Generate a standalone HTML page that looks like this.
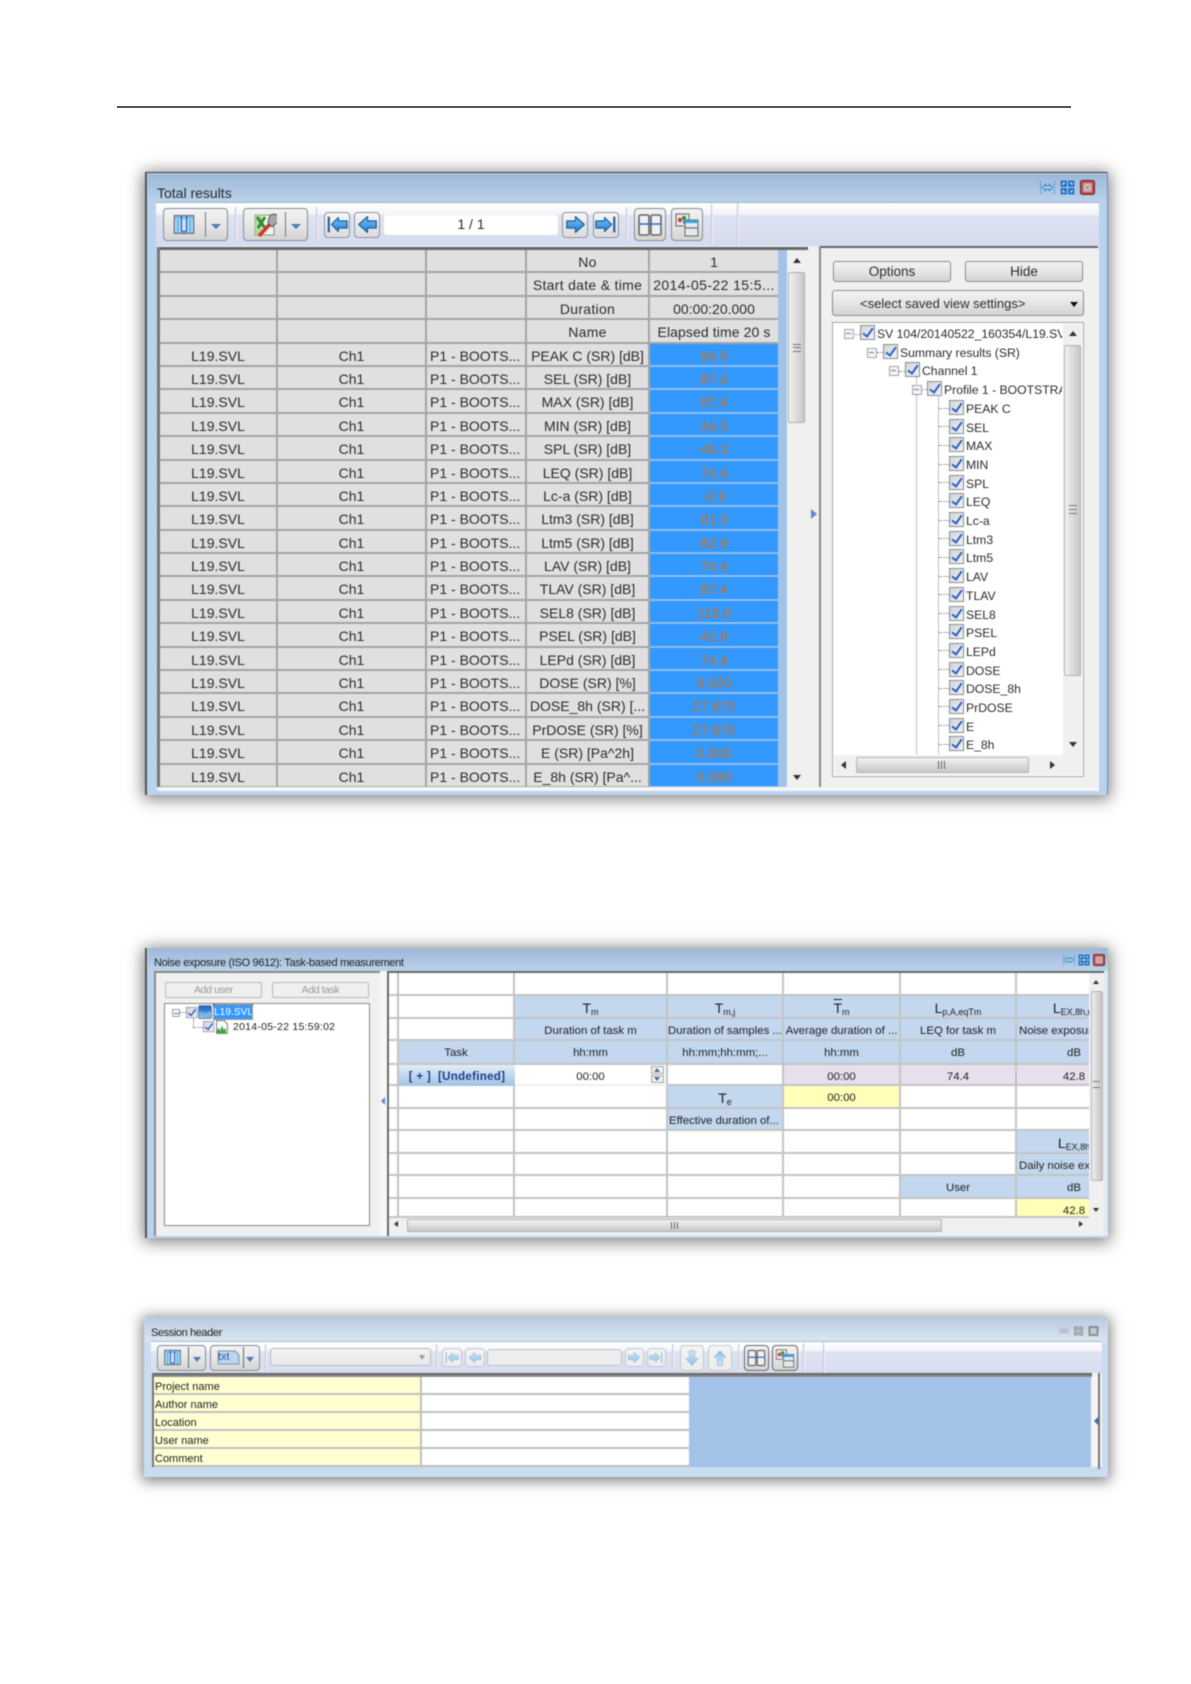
<!DOCTYPE html>
<html><head><meta charset="utf-8"><title>Results</title>
<style>
html,body{margin:0;padding:0;background:#fff}
body{position:relative;width:1191px;height:1684px;overflow:hidden;font-family:"Liberation Sans",sans-serif;color:#2c2c2c}
.a{position:absolute;box-sizing:border-box}
.win{position:absolute;box-sizing:border-box;background:#b9d2ee;box-shadow:0 2px 15px 2px rgba(0,0,0,.5)}
.blur{position:absolute;left:0;top:0;width:1191px;height:1684px;filter:blur(.45px)}
.btn{position:absolute;box-sizing:border-box;border:1.5px solid #858c94;border-radius:4px;background:linear-gradient(#f3f3f3,#e6e6e6 50%,#d4d4d4)}
.nb{position:absolute;box-sizing:border-box;border:1.5px solid #8d949c;border-radius:4px;background:linear-gradient(#f6f6f6,#dcdcdc)}
.dis{border-color:#c4c8cc;background:linear-gradient(#f4f4f4,#ececec)}
.sep{position:absolute;width:1px;background:#c3c8d4;border-right:1px solid #f4f4f8}
svg{position:absolute;overflow:visible}
.tri{position:absolute;width:0;height:0;border-style:solid;border-color:transparent}
.u{border-width:0 4px 5px;border-bottom-color:#333}
.d{border-width:5px 4px 0;border-top-color:#333}
.l{border-width:4px 5px 4px 0;border-right-color:#333}
.ri{border-width:4px 0 4px 5px;border-left-color:#333}
.bd{border-width:6px 6px 0;border-top-color:#4b79b8}

/* table 1 */
#t1{position:absolute;left:160px;top:250px;width:618px;height:537px;overflow:hidden;background:#e0e0e0}
.r{display:flex;height:23.4px;box-sizing:border-box;font-size:14px;line-height:25px;text-align:center}
.r span{box-sizing:border-box;border-right:2px solid #a4a4a4;border-bottom:2px solid #a4a4a4;height:23.4px;white-space:nowrap;overflow:hidden;background:#e0e0e0}
.r span:nth-child(1){width:118px}
.r span:nth-child(2){width:149px}
.r span:nth-child(3){width:100px;text-align:left;padding-left:3px}
.r span:nth-child(4){width:123px}
.r span:nth-child(5){width:128px;border-right:0}
.r.h span:nth-child(3){padding:0}
.r.h span:nth-child(4){letter-spacing:.3px}
.r b{display:block;box-sizing:border-box;width:128px;height:23.4px;font-weight:400;color:#c9701f;background:#3399ff;border-bottom:2px solid #8fbdec}
/* tree 1 */
.ti{position:absolute;height:16px;font-size:12.2px;line-height:18px;white-space:nowrap;color:#2c2c2c;padding-left:17px}
.ck{position:absolute;left:0;top:0;width:15px;height:15px;box-sizing:border-box;border:1.5px solid #8b8e93;background:linear-gradient(135deg,#d2d4d8,#f2f2f4)}
.ck:after{content:"";position:absolute;left:4px;top:0;width:4px;height:9px;border:solid #2a62c6;border-width:0 2px 2px 0;transform:rotate(35deg)}
.ck.s{transform:scale(.74);transform-origin:0 0}
.ex{position:absolute;width:10px;height:10px;box-sizing:border-box;border:1.5px solid #a0a5ab;background:#f4f4f6}
.ex:after{content:"";position:absolute;left:1px;top:2.5px;width:5px;height:1.5px;background:#6f7f9a}
.dv{position:absolute;border-left:1px dotted #808080}
.dh{position:absolute;border-top:1px dotted #808080}

/* noise grid */
#g2{position:absolute;left:389px;top:973px;height:245px;overflow:hidden;background:#fff;display:grid;
 grid-template-columns:10px 116px 153px 116px 117px 116px 116px;
 grid-template-rows:23px 23px 22px 24px 21px 23px 22px 23px 22px 23px 19px;
 font-size:11.4px;text-align:center;width:700px}
#g2 i{font-style:normal;box-sizing:border-box;border-right:2px solid #c4c4c4;border-bottom:2px solid #c4c4c4;line-height:24px;white-space:nowrap;overflow:hidden;color:#222}
#g2 .b{background:#c3d7ef}
#g2 .lv{background:#e5e0ec}
#g2 .y{background:#ffffb8}
#g2 .nb2{border-right:0}
#g2 sub{font-size:9px;vertical-align:-2px;line-height:0}
#g2 .big{font-size:14px}
#g2 .left{text-align:left;padding-left:2px}

/* session */
.sr{position:absolute;box-sizing:border-box;height:18px;border-bottom:2px solid #c0c0c0;font-size:11px;line-height:20px;padding-left:1px;color:#222;overflow:hidden}
</style></head>
<body>
<svg width="0" height="0" style="position:absolute">
 <defs>
  <linearGradient id="ag" x1="0" y1="0" x2="0" y2="1"><stop offset="0" stop-color="#7cc6f5"/><stop offset="1" stop-color="#1f7fd0"/></linearGradient>
  <linearGradient id="ag2" x1="0" y1="0" x2="0" y2="1"><stop offset="0" stop-color="#cfe6f6"/><stop offset="1" stop-color="#8cc2e8"/></linearGradient>
  <symbol id="aL" viewBox="0 0 24 24"><path d="M2 12L12 3V8H22V16H12V21Z" fill="url(#ag)" stroke="#1b5f9e" stroke-width="1.4" stroke-linejoin="round"/></symbol>
  <symbol id="aF" viewBox="0 0 24 24"><path d="M2 3V21" stroke="#1b5f9e" stroke-width="2.4"/><path d="M5 12L13 4V8H23V16H13V20Z" fill="url(#ag)" stroke="#1b5f9e" stroke-width="1.4" stroke-linejoin="round"/></symbol>
  <symbol id="aLd" viewBox="0 0 24 24"><path d="M2 12L12 3V8H22V16H12V21Z" fill="url(#ag2)" stroke="#9cc2dc" stroke-width="1.2" stroke-linejoin="round"/></symbol>
  <symbol id="aFd" viewBox="0 0 24 24"><path d="M2 3V21" stroke="#9cc2dc" stroke-width="2.2"/><path d="M5 12L13 4V8H23V16H13V20Z" fill="url(#ag2)" stroke="#9cc2dc" stroke-width="1.2" stroke-linejoin="round"/></symbol>
  <symbol id="cols" viewBox="0 0 24 24"><rect x="1" y="2" width="22" height="20" fill="#c8e6f6" stroke="#6d7f90" stroke-width="1.8"/><rect x="2" y="3" width="20" height="3" fill="#7fc4ee"/><path d="M5 6V21M19 6V21" stroke="#66bcec" stroke-width="3"/><path d="M9 3V20M15 3V20M9 20H15" stroke="#2858b8" stroke-width="1.5" fill="none"/></symbol>
  <symbol id="xls" viewBox="0 0 24 24"><rect x="2" y="2" width="19" height="20" fill="#f0f6ea" stroke="#7d9a74" stroke-width="1"/><rect x="2" y="2" width="7" height="20" fill="#b4d8a0"/><path d="M4 4L12 15M12 4L5 15" stroke="#2f8d35" stroke-width="3"/><path d="M6 23L17 11" stroke="#d8352a" stroke-width="3.6"/><path d="M16 5a5 5 0 1 1 6 6l-3 3-4-4Z" fill="#a4a9ae" stroke="#55595e" stroke-width="1"/></symbol>
  <symbol id="two" viewBox="0 0 24 24"><rect x="1" y="2" width="10" height="20" rx="1.5" fill="#eef0f2" stroke="#666" stroke-width="1.6"/><rect x="13" y="2" width="10" height="20" rx="1.5" fill="#eef0f2" stroke="#666" stroke-width="1.6"/><path d="M1 11H23" stroke="#2d6cc8" stroke-width="1.6"/></symbol>
  <symbol id="multi" viewBox="0 0 24 24"><rect x="1" y="1" width="13" height="12" fill="#e8e8e8" stroke="#777" stroke-width="1.2"/><circle cx="5" cy="7" r="2.2" fill="#d8382c"/><circle cx="9" cy="5" r="2.2" fill="#2f9a3a"/><circle cx="10" cy="9" r="2" fill="#2f6fd0"/><rect x="10" y="7" width="13" height="8" fill="#dfeaf5" stroke="#777" stroke-width="1.2"/><rect x="10" y="7" width="13" height="3" fill="#3f9be0"/><rect x="10" y="15" width="13" height="8" fill="#e8e8e8" stroke="#777" stroke-width="1.2"/></symbol>
  <symbol id="fitw" viewBox="0 0 24 24"><path d="M1 2V22M23 2V22" stroke="#3f93dc" stroke-width="2.4" stroke-dasharray="2.5 2"/><path d="M4 12L9 7V10H15V7L20 12L15 17V14H9V17Z" fill="#cfe6f8" stroke="#2f86d0" stroke-width="1.7"/></symbol>
  <symbol id="fitall" viewBox="0 0 24 24"><g fill="#1f6fc4"><rect x="1" y="1" width="10" height="10"/><rect x="13" y="1" width="10" height="10"/><rect x="1" y="13" width="10" height="10"/><rect x="13" y="13" width="10" height="10"/></g><g fill="#bcdcf6"><path d="M4 4H9L4 9ZM20 4V9L15 4ZM4 20V15L9 20ZM20 20H15L20 15Z"/></g></symbol>
  <symbol id="close" viewBox="0 0 24 24"><rect x="1" y="1" width="22" height="22" rx="3" fill="#c8504c" stroke="#6e2e2c" stroke-width="2"/><rect x="5" y="5" width="14" height="14" fill="#d0a8a8"/><path d="M8 8L16 16M16 8L8 16" stroke="#fff" stroke-width="3.2"/><path d="M8 8L16 16M16 8L8 16" stroke="#444" stroke-width="1.1"/></symbol>
  <symbol id="aD" viewBox="0 0 24 24"><path d="M12 23L3 13H8V1H16V13H21Z" fill="url(#ag2)" stroke="#9cc2dc" stroke-width="1.2" stroke-linejoin="round"/></symbol>
  <symbol id="txt" viewBox="0 0 24 16"><path d="M1 1H19L23 5V15H1Z" fill="#bcd6ee" stroke="#6c8cae"/></symbol>
 </defs>
</svg>

<div class="a" style="left:117px;top:106px;width:954px;height:2px;background:#555"></div>

<div class="blur">

<!-- ===== WINDOW 1 ===== -->
<div class="win" style="left:145px;top:172px;width:963px;height:623px;border-top:1.5px solid #3a3a3a;border-left:2px solid #555;border-right:1px solid #6b93b0"></div>
<div class="a" style="left:148px;top:174px;width:959px;height:29px;background:linear-gradient(#9db8d8,#bcd3ea)"></div>
<div class="a" style="left:157px;top:183px;font-size:14px;line-height:20px;color:#2a2a2a">Total results</div>
<svg style="left:1040px;top:180px" width="15" height="15"><use href="#fitw"/></svg>
<svg style="left:1060px;top:180px" width="15" height="15"><use href="#fitall"/></svg>
<svg style="left:1080px;top:180px" width="15" height="15"><use href="#close"/></svg>

<!-- toolbar -->
<div class="a" style="left:156px;top:202px;width:943px;height:44px;background:linear-gradient(#fff,#f4f5fa 25%,#dfe3f2 30%,#d5dbee);border-top:1px solid #9fb3c9"></div>
<div class="btn" style="left:163px;top:208px;width:65px;height:33px"></div>
<svg style="left:173px;top:214px" width="22" height="21"><use href="#cols"/></svg>
<div class="a" style="left:205px;top:212px;width:1px;height:25px;background:#777"></div>
<div class="tri bd" style="left:211px;top:224px;border-width:5px 5px 0"></div>
<div class="sep" style="left:235px;top:207px;height:35px"></div>
<div class="btn" style="left:243px;top:208px;width:65px;height:33px"></div>
<svg style="left:253px;top:213px" width="24" height="24"><use href="#xls"/></svg>
<div class="a" style="left:285px;top:212px;width:1px;height:25px;background:#777"></div>
<div class="tri bd" style="left:291px;top:224px;border-width:5px 5px 0"></div>
<div class="sep" style="left:316px;top:207px;height:35px"></div>
<div class="nb" style="left:324px;top:212px;width:26px;height:26px"></div>
<svg style="left:327px;top:214px" width="21" height="21"><use href="#aF"/></svg>
<div class="nb" style="left:354px;top:212px;width:26px;height:26px"></div>
<svg style="left:357px;top:214px" width="21" height="21"><use href="#aL"/></svg>
<div class="a" style="left:384px;top:215px;width:174px;height:20px;background:#fff;border-radius:3px;font-size:14px;line-height:19px;text-align:center">1 / 1</div>
<div class="nb" style="left:562px;top:212px;width:26px;height:26px"></div>
<svg style="left:565px;top:214px;transform:scaleX(-1)" width="21" height="21"><use href="#aL"/></svg>
<div class="nb" style="left:593px;top:212px;width:26px;height:26px"></div>
<svg style="left:595px;top:214px;transform:scaleX(-1)" width="21" height="21"><use href="#aF"/></svg>
<div class="sep" style="left:626px;top:207px;height:35px"></div>
<div class="btn" style="left:634px;top:208px;width:32px;height:33px"></div>
<svg style="left:638px;top:213px" width="24" height="24"><use href="#two"/></svg>
<div class="btn" style="left:671px;top:208px;width:32px;height:33px"></div>
<svg style="left:675px;top:213px" width="24" height="24"><use href="#multi"/></svg>
<div class="sep" style="left:711px;top:204px;height:40px"></div>
<div class="sep" style="left:737px;top:203px;height:42px"></div>

<!-- body -->
<div class="a" style="left:157px;top:246px;width:942px;height:545px;background:#f0f0f0"></div>
<div class="a" style="left:157px;top:247px;width:651px;height:3px;background:#676767"></div>
<div class="a" style="left:157px;top:247px;width:3px;height:540px;background:#777"></div>
<div class="a" style="left:778px;top:250px;width:9px;height:537px;background:#a3c2e8"></div>
<div class="a" style="left:819px;top:246px;width:279px;height:2px;background:#676767"></div>
<div class="a" style="left:819px;top:246px;width:2px;height:545px;background:#8a8a8a"></div>
<div class="a" style="left:159px;top:787px;width:940px;height:4px;background:#f6f6f6"></div>

<div id="t1">
<div class="r h"><span></span><span></span><span></span><span>No</span><span>1</span></div>
<div class="r h"><span></span><span></span><span></span><span>Start date &amp; time</span><span style="letter-spacing:.4px">2014-05-22 15:5...</span></div>
<div class="r h"><span></span><span></span><span></span><span>Duration</span><span>00:00:20.000</span></div>
<div class="r h"><span></span><span></span><span></span><span>Name</span><span style="letter-spacing:.1px">Elapsed time 20 s</span></div>
<div class="r"><span>L19.SVL</span><span>Ch1</span><span>P1 - BOOTS...</span><span>PEAK C (SR) [dB]</span><b>94.5</b></div>
<div class="r"><span>L19.SVL</span><span>Ch1</span><span>P1 - BOOTS...</span><span>SEL (SR) [dB]</span><b>87.4</b></div>
<div class="r"><span>L19.SVL</span><span>Ch1</span><span>P1 - BOOTS...</span><span>MAX (SR) [dB]</span><b>87.4</b></div>
<div class="r"><span>L19.SVL</span><span>Ch1</span><span>P1 - BOOTS...</span><span>MIN (SR) [dB]</span><b>44.5</b></div>
<div class="r"><span>L19.SVL</span><span>Ch1</span><span>P1 - BOOTS...</span><span>SPL (SR) [dB]</span><b>46.3</b></div>
<div class="r"><span>L19.SVL</span><span>Ch1</span><span>P1 - BOOTS...</span><span>LEQ (SR) [dB]</span><b>74.4</b></div>
<div class="r"><span>L19.SVL</span><span>Ch1</span><span>P1 - BOOTS...</span><span>Lc-a (SR) [dB]</span><b>-0.9</b></div>
<div class="r"><span>L19.SVL</span><span>Ch1</span><span>P1 - BOOTS...</span><span>Ltm3 (SR) [dB]</span><b>81.3</b></div>
<div class="r"><span>L19.SVL</span><span>Ch1</span><span>P1 - BOOTS...</span><span>Ltm5 (SR) [dB]</span><b>82.9</b></div>
<div class="r"><span>L19.SVL</span><span>Ch1</span><span>P1 - BOOTS...</span><span>LAV (SR) [dB]</span><b>74.4</b></div>
<div class="r"><span>L19.SVL</span><span>Ch1</span><span>P1 - BOOTS...</span><span>TLAV (SR) [dB]</span><b>87.4</b></div>
<div class="r"><span>L19.SVL</span><span>Ch1</span><span>P1 - BOOTS...</span><span>SEL8 (SR) [dB]</span><b>119.0</b></div>
<div class="r"><span>L19.SVL</span><span>Ch1</span><span>P1 - BOOTS...</span><span>PSEL (SR) [dB]</span><b>42.8</b></div>
<div class="r"><span>L19.SVL</span><span>Ch1</span><span>P1 - BOOTS...</span><span>LEPd (SR) [dB]</span><b>74.4</b></div>
<div class="r"><span>L19.SVL</span><span>Ch1</span><span>P1 - BOOTS...</span><span>DOSE (SR) [%]</span><b>0.020</b></div>
<div class="r"><span>L19.SVL</span><span>Ch1</span><span>P1 - BOOTS...</span><span>DOSE_8h (SR) [...</span><b>27.670</b></div>
<div class="r"><span>L19.SVL</span><span>Ch1</span><span>P1 - BOOTS...</span><span>PrDOSE (SR) [%]</span><b>27.670</b></div>
<div class="r"><span>L19.SVL</span><span>Ch1</span><span>P1 - BOOTS...</span><span>E (SR) [Pa^2h]</span><b>0.000</b></div>
<div class="r"><span>L19.SVL</span><span>Ch1</span><span>P1 - BOOTS...</span><span>E_8h (SR) [Pa^...</span><b>0.090</b></div>
</div>

<!-- main scrollbar -->
<div class="a" style="left:787px;top:250px;width:21px;height:537px;background:#f0f0f0"></div>
<div class="tri u" style="left:793px;top:258px"></div>
<div class="a" style="left:788px;top:272px;width:17px;height:151px;background:linear-gradient(90deg,#f2f2f2,#dcdcdc 50%,#c8c8c8);border:1px solid #b0b0b0;border-radius:2px"></div>
<div class="a" style="left:793px;top:344px;width:8px;height:8px;border-top:1px solid #777;border-bottom:1px solid #777"></div>
<div class="a" style="left:793px;top:347px;width:8px;height:1px;background:#777"></div>
<div class="tri d" style="left:793px;top:775px"></div>
<div class="tri" style="left:811px;top:509px;border-width:5px 0 5px 6px;border-left-color:#5a8cc8"></div>

<!-- right pane -->
<div class="btn" style="left:833px;top:261px;width:118px;height:21px;border-color:#8b8b8b;border-radius:3px;font-size:13.5px;line-height:19px;text-align:center">Options</div>
<div class="btn" style="left:965px;top:261px;width:118px;height:21px;border-color:#8b8b8b;border-radius:3px;font-size:13.5px;line-height:19px;text-align:center">Hide</div>
<div class="btn" style="left:832px;top:290px;width:252px;height:26px;border-color:#8b8b8b;border-radius:3px;font-size:13px;line-height:26px;padding-left:27px;white-space:nowrap">&lt;select saved view settings&gt;</div>
<div class="tri" style="left:1070px;top:302px;border-width:5px 4px 0;border-top-color:#111"></div>

<div class="a" style="left:832px;top:322px;width:252px;height:455px;background:#fff;border:1.5px solid #a8a8a8"></div>
<div class="a" id="treeclip" style="left:834px;top:324px;width:228px;height:430px;overflow:hidden">
 <div class="dv" style="left:82px;top:52px;height:380px"></div>
 <div class="dv" style="left:104px;top:66px;height:370px"></div>
 <div class="dh" style="left:21px;top:10px;width:5px"></div>
 <div class="dh" style="left:43px;top:28px;width:6px"></div>
 <div class="dh" style="left:65px;top:47px;width:6px"></div>
 <div class="dh" style="left:88px;top:65px;width:5px"></div>
 <div class="ex" style="left:10px;top:5px"></div><div class="ti" style="left:26px;top:1px">SV 104/20140522_160354/L19.SVL<div class="ck"></div></div>
 <div class="ex" style="left:33px;top:24px"></div><div class="ti" style="left:49px;top:19.7px">Summary results (SR)<div class="ck"></div></div>
 <div class="ex" style="left:55px;top:42px"></div><div class="ti" style="left:71px;top:38.4px">Channel 1<div class="ck"></div></div>
 <div class="ex" style="left:78px;top:61px"></div><div class="ti" style="left:93px;top:57.1px">Profile 1 - BOOTSTRAP<div class="ck"></div></div>
 <div class="dh" style="left:105px;top:84px;width:10px"></div><div class="ti" style="left:115px;top:75.8px">PEAK C<div class="ck"></div></div>
 <div class="dh" style="left:105px;top:102px;width:10px"></div><div class="ti" style="left:115px;top:94.5px">SEL<div class="ck"></div></div>
 <div class="dh" style="left:105px;top:121px;width:10px"></div><div class="ti" style="left:115px;top:113.2px">MAX<div class="ck"></div></div>
 <div class="dh" style="left:105px;top:140px;width:10px"></div><div class="ti" style="left:115px;top:131.9px">MIN<div class="ck"></div></div>
 <div class="dh" style="left:105px;top:158px;width:10px"></div><div class="ti" style="left:115px;top:150.6px">SPL<div class="ck"></div></div>
 <div class="dh" style="left:105px;top:177px;width:10px"></div><div class="ti" style="left:115px;top:169.3px">LEQ<div class="ck"></div></div>
 <div class="dh" style="left:105px;top:196px;width:10px"></div><div class="ti" style="left:115px;top:188px">Lc-a<div class="ck"></div></div>
 <div class="dh" style="left:105px;top:214px;width:10px"></div><div class="ti" style="left:115px;top:206.7px">Ltm3<div class="ck"></div></div>
 <div class="dh" style="left:105px;top:233px;width:10px"></div><div class="ti" style="left:115px;top:225.4px">Ltm5<div class="ck"></div></div>
 <div class="dh" style="left:105px;top:252px;width:10px"></div><div class="ti" style="left:115px;top:244.1px">LAV<div class="ck"></div></div>
 <div class="dh" style="left:105px;top:270px;width:10px"></div><div class="ti" style="left:115px;top:262.8px">TLAV<div class="ck"></div></div>
 <div class="dh" style="left:105px;top:289px;width:10px"></div><div class="ti" style="left:115px;top:281.5px">SEL8<div class="ck"></div></div>
 <div class="dh" style="left:105px;top:308px;width:10px"></div><div class="ti" style="left:115px;top:300.2px">PSEL<div class="ck"></div></div>
 <div class="dh" style="left:105px;top:326px;width:10px"></div><div class="ti" style="left:115px;top:318.9px">LEPd<div class="ck"></div></div>
 <div class="dh" style="left:105px;top:345px;width:10px"></div><div class="ti" style="left:115px;top:337.6px">DOSE<div class="ck"></div></div>
 <div class="dh" style="left:105px;top:364px;width:10px"></div><div class="ti" style="left:115px;top:356.3px">DOSE_8h<div class="ck"></div></div>
 <div class="dh" style="left:105px;top:382px;width:10px"></div><div class="ti" style="left:115px;top:375px">PrDOSE<div class="ck"></div></div>
 <div class="dh" style="left:105px;top:401px;width:10px"></div><div class="ti" style="left:115px;top:393.7px">E<div class="ck"></div></div>
 <div class="dh" style="left:105px;top:420px;width:10px"></div><div class="ti" style="left:115px;top:412.4px">E_8h<div class="ck"></div></div>
</div>
<!-- tree scrollbars -->
<div class="a" style="left:1063px;top:324px;width:19px;height:431px;background:#f0f0f0"></div>
<div class="tri u" style="left:1069px;top:331px"></div>
<div class="a" style="left:1064px;top:345px;width:17px;height:331px;background:linear-gradient(90deg,#f0f0f0,#dcdcdc 50%,#c8c8c8);border:1px solid #b4b4b4;border-radius:2px"></div>
<div class="a" style="left:1069px;top:505px;width:8px;height:9px;border-top:1px solid #777;border-bottom:1px solid #777"></div>
<div class="a" style="left:1069px;top:509px;width:8px;height:1px;background:#777"></div>
<div class="tri d" style="left:1069px;top:742px"></div>
<div class="a" style="left:834px;top:755px;width:248px;height:20px;background:#f0f0f0"></div>
<div class="tri l" style="left:841px;top:761px"></div>
<div class="a" style="left:856px;top:757px;width:173px;height:16px;background:linear-gradient(#f2f2f2,#dcdcdc 50%,#c8c8c8);border:1px solid #b4b4b4;border-radius:2px"></div>
<div class="a" style="left:938px;top:761px;width:1px;height:8px;background:#666;box-shadow:3px 0 #666,6px 0 #666"></div>
<div class="tri ri" style="left:1050px;top:761px"></div>

<!-- ===== WINDOW 2 ===== -->
<div class="win" style="left:145px;top:948px;width:963px;height:290px;border-left:2px solid #555"></div>
<div class="a" style="left:148px;top:948px;width:960px;height:24px;background:linear-gradient(#9db8d8,#bcd3ea)"></div>
<div class="a" style="left:154px;top:955px;font-size:11px;letter-spacing:-.33px;line-height:16px;color:#222;white-space:nowrap">Noise exposure (ISO 9612): Task-based measurement</div>
<svg style="left:1063px;top:954px" width="12" height="12"><use href="#fitw"/></svg>
<svg style="left:1078px;top:954px" width="12" height="12"><use href="#fitall"/></svg>
<svg style="left:1093px;top:954px" width="12" height="12"><use href="#close"/></svg>

<div class="a" style="left:154px;top:971px;width:950px;height:265px;background:#f0f0f0"></div>
<div class="a" style="left:154px;top:971px;width:226px;height:2px;background:#8a8a8a"></div>
<div class="a" style="left:154px;top:971px;width:1.5px;height:265px;background:#8a8a8a"></div>
<div class="a" style="left:380px;top:971px;width:7px;height:265px;background:#f7f7f7"></div>

<div class="a" style="left:165px;top:982px;width:97px;height:16px;border:1px solid #b8b8b8;border-radius:2px;background:#efefef;font-size:10.5px;letter-spacing:-.4px;line-height:15px;text-align:center;color:#9a9a9a">Add user</div>
<div class="a" style="left:272px;top:982px;width:97px;height:16px;border:1px solid #b8b8b8;border-radius:2px;background:#efefef;font-size:10.5px;letter-spacing:-.4px;line-height:15px;text-align:center;color:#9a9a9a">Add task</div>
<div class="a" style="left:164px;top:1003px;width:206px;height:223px;background:#fff;border:1.5px solid #8a8a8a"></div>
<div class="ex" style="left:172px;top:1009px;width:8px;height:8px"></div>
<div class="dh" style="left:180px;top:1012px;width:6px"></div>
<div class="ck s" style="left:186px;top:1007px"></div>
<div class="a" style="left:198px;top:1005px;width:14px;height:14px;background:linear-gradient(#1f66c8,#3d92d8 60%,#7fb7d8);border:1px solid #6c8aa8;border-radius:2px;color:#cfe6ff;font-size:7px;line-height:20px;text-align:center;overflow:hidden">SVN</div>
<div class="a" style="left:214px;top:1005px;width:38px;height:14px;background:#3399ff;outline:1px dotted #5b3a00;color:#fff;font-size:10px;letter-spacing:.1px;line-height:15px;text-align:center;white-space:nowrap;overflow:hidden">L19.SVL</div>
<div class="dv" style="left:193px;top:1019px;height:8px"></div>
<div class="dh" style="left:193px;top:1027px;width:10px"></div>
<div class="ck s" style="left:203px;top:1021px"></div>
<svg style="left:216px;top:1020px" width="12" height="14" viewBox="0 0 12 14"><path d="M.5.5H8L11.5 4V13.5H.5Z" fill="#f4f6fa" stroke="#7d8794"/><path d="M1 13V10L3 8L4 11L6 6L8 10L10 8V13Z" fill="#3da82f"/></svg>
<div class="a" style="left:233px;top:1020px;font-size:10.5px;line-height:14px;white-space:nowrap;color:#222;letter-spacing:.25px">2014-05-22 15:59:02</div>
<div class="tri" style="left:381px;top:1097px;border-width:4px 4px 4px 0;border-right-color:#5a8cc8"></div>

<div class="a" style="left:387px;top:971px;width:717px;height:2.5px;background:#6a6a6a"></div>
<div class="a" style="left:387px;top:971px;width:2px;height:265px;background:#6a6a6a"></div>

<div id="g2">
<i></i><i></i><i></i><i></i><i></i><i></i><i></i>
<i></i><i></i><i class="b"><span class="big">T<sub>m</sub></span></i><i class="b"><span class="big">T<sub>m,j</sub></span></i><i class="b"><span class="big" style="text-decoration:overline">T</span><sub>m</sub></i><i class="b"><span class="big">L<sub>p,A,eqTm</sub></span></i><i class="b"><span class="big">L<sub>EX,8h,m</sub></span></i>
<i></i><i></i><i class="b">Duration of task m</i><i class="b">Duration of samples ...</i><i class="b">Average duration of ...</i><i class="b">LEQ for task m</i><i class="b left">Noise exposure level</i>
<i></i><i class="b">Task</i><i class="b">hh:mm</i><i class="b">hh:mm;hh:mm;...</i><i class="b">hh:mm</i><i class="b">dB</i><i class="b">dB</i>
<i></i><i style="background:linear-gradient(#e4eef8,#bcd4ee 55%,#a4c2e4);color:#1f3f8a;font-weight:700;font-size:11.5px;letter-spacing:.3px;border-right:0;border-bottom:0;padding:0 1px">[ + ]&nbsp; [Undefined]</i><i style="border-bottom-color:#eee;padding-right:0">00:00</i><i></i><i class="lv">00:00</i><i class="lv">74.4</i><i class="lv">42.8</i>
<i></i><i></i><i></i><i class="b"><span class="big">T<sub>e</sub></span></i><i class="y">00:00</i><i></i><i></i>
<i></i><i></i><i></i><i class="b left" style="padding-left:1px">Effective duration of...</i><i></i><i></i><i></i>
<i></i><i></i><i></i><i></i><i></i><i></i><i class="b" style="text-align:center"><span class="big">L<sub>EX,8h</sub></span></i>
<i></i><i></i><i></i><i></i><i></i><i></i><i class="b left">Daily noise exposure</i>
<i></i><i></i><i></i><i></i><i></i><i class="b">User</i><i class="b">dB</i>
<i></i><i></i><i></i><i></i><i></i><i></i><i class="y">42.8</i>
</div>
<!-- cover right of clipped col -->
<div class="a" style="left:1089px;top:973px;width:15px;height:263px;background:#f0f0f0"></div>
<div class="a" style="left:389px;top:1218px;width:715px;height:18px;background:#f0f0f0"></div>
<div class="a" style="left:1104px;top:971px;width:4px;height:265px;background:#dfe9f4"></div>
<!-- spinner -->
<div class="a" style="left:651px;top:1066px;width:13px;height:8px;background:#eee;border:1px solid #aaa"></div>
<div class="a" style="left:651px;top:1075px;width:13px;height:8px;background:#eee;border:1px solid #aaa"></div>
<div class="tri" style="left:654px;top:1068px;border-width:0 3px 4px;border-bottom-color:#4a6a9c"></div>
<div class="tri" style="left:654px;top:1077px;border-width:4px 3px 0;border-top-color:#4a6a9c"></div>
<!-- scrollbars -->
<div class="tri" style="left:1093px;top:980px;border-width:0 3.5px 4px;border-bottom-color:#333"></div>
<div class="a" style="left:1091px;top:991px;width:12px;height:190px;background:linear-gradient(90deg,#eee,#d4d4d4 60%,#c4c4c4);border:1px solid #b4b4b4;border-radius:2px"></div>
<div class="a" style="left:1093px;top:1081px;width:7px;height:7px;border-top:1px solid #777;border-bottom:1px solid #777"></div>
<div class="tri" style="left:1093px;top:1208px;border-width:4px 3.5px 0;border-top-color:#333"></div>
<div class="tri" style="left:394px;top:1221px;border-width:3.5px 4px 3.5px 0;border-right-color:#333"></div>
<div class="a" style="left:407px;top:1219px;width:535px;height:13px;background:linear-gradient(#f2f2f2,#dcdcdc 55%,#c8c8c8);border:1px solid #b0b0b0;border-radius:2px"></div>
<div class="a" style="left:671px;top:1222px;width:1px;height:7px;background:#666;box-shadow:3px 0 #666,6px 0 #666"></div>
<div class="tri" style="left:1079px;top:1221px;border-width:3.5px 0 3.5px 4px;border-left-color:#333"></div>

<!-- ===== WINDOW 3 ===== -->
<div class="win" style="left:144px;top:1317px;width:964px;height:160px;background:#c9dcf0;box-shadow:0 2px 13px 2px rgba(0,0,0,.5)"></div>
<div class="a" style="left:145px;top:1317px;width:962px;height:25px;background:linear-gradient(#bacbde,#dae7f4)"></div>
<div class="a" style="left:151px;top:1325px;font-size:11px;letter-spacing:-.4px;line-height:16px;color:#222;white-space:nowrap">Session header</div>
<svg style="left:1058px;top:1326px;opacity:.55;filter:grayscale(1)" width="12" height="10"><use href="#fitw"/></svg>
<svg style="left:1073px;top:1326px;opacity:.55;filter:grayscale(1)" width="11" height="10"><use href="#fitall"/></svg>
<svg style="left:1088px;top:1326px;opacity:.55;filter:grayscale(1)" width="11" height="10"><use href="#close"/></svg>

<div class="a" style="left:151px;top:1341px;width:951px;height:33px;background:linear-gradient(#fff,#f6f7fb 25%,#dfe3f2 32%,#d7ddef);border-top:1px solid #aab8c8"></div>
<div class="btn" style="left:157px;top:1345px;width:49px;height:26px"></div>
<svg style="left:164px;top:1349px" width="17" height="17"><use href="#cols"/></svg>
<div class="a" style="left:188px;top:1347px;width:1px;height:21px;background:#666"></div>
<div class="tri bd" style="left:193px;top:1357px;border-width:5px 4.5px 0"></div>
<div class="btn" style="left:210px;top:1345px;width:50px;height:26px"></div>
<svg style="left:217px;top:1350px" width="23" height="15"><use href="#txt"/></svg>
<div class="a" style="left:218px;top:1351px;font-size:11px;line-height:13px;color:#2a5aa8">txt</div>
<div class="a" style="left:243px;top:1347px;width:1px;height:21px;background:#666"></div>
<div class="tri bd" style="left:246px;top:1357px;border-width:5px 4.5px 0"></div>
<div class="sep" style="left:265px;top:1344px;height:27px"></div>
<div class="a" style="left:270px;top:1348px;width:161px;height:18px;border:1px solid #b4bac2;border-radius:3px;background:linear-gradient(#f2f2f2,#e8e8ec)"></div>
<div class="tri" style="left:419px;top:1355px;border-width:5px 3.5px 0;border-top-color:#a0a0a0"></div>
<div class="sep" style="left:436px;top:1344px;height:27px"></div>
<div class="nb dis" style="left:442px;top:1348px;width:20px;height:19px"></div>
<svg style="left:445px;top:1350px" width="14" height="15"><use href="#aFd"/></svg>
<div class="nb dis" style="left:465px;top:1348px;width:20px;height:19px"></div>
<svg style="left:468px;top:1350px" width="14" height="15"><use href="#aLd"/></svg>
<div class="a" style="left:487px;top:1349px;width:135px;height:17px;border:1px solid #bcc4cc;border-radius:3px;background:#ededed"></div>
<div class="nb dis" style="left:625px;top:1348px;width:19px;height:19px"></div>
<svg style="left:627px;top:1350px;transform:scaleX(-1)" width="14" height="15"><use href="#aLd"/></svg>
<div class="nb dis" style="left:647px;top:1348px;width:19px;height:19px"></div>
<svg style="left:649px;top:1350px;transform:scaleX(-1)" width="14" height="15"><use href="#aFd"/></svg>
<div class="sep" style="left:672px;top:1344px;height:27px"></div>
<div class="nb dis" style="left:680px;top:1345px;width:24px;height:26px"></div>
<svg style="left:684px;top:1349px" width="16" height="18"><use href="#aD"/></svg>
<div class="nb dis" style="left:708px;top:1345px;width:24px;height:26px"></div>
<svg style="left:712px;top:1349px;transform:scaleY(-1)" width="16" height="18"><use href="#aD"/></svg>
<div class="sep" style="left:738px;top:1344px;height:27px"></div>
<div class="btn" style="left:744px;top:1345px;width:25px;height:26px;border-color:#6a6a6a"></div>
<svg style="left:747px;top:1349px" width="19" height="18"><use href="#two"/></svg>
<div class="btn" style="left:772px;top:1345px;width:26px;height:26px;border-color:#6a6a6a"></div>
<svg style="left:775px;top:1349px" width="20" height="19"><use href="#multi"/></svg>
<div class="sep" style="left:803px;top:1343px;height:30px"></div>
<div class="sep" style="left:823px;top:1342px;height:32px"></div>

<div class="a" style="left:152px;top:1373px;width:950px;height:94px;background:#f2f2f2"></div>
<div class="a" style="left:152px;top:1373px;width:940px;height:4px;background:linear-gradient(#5a5a5a,#999)"></div>
<div class="a" style="left:152px;top:1373px;width:2px;height:94px;background:#777"></div>
<div class="a" style="left:154px;top:1377px;width:937px;height:90px;background:#a3c2e8"></div>
<div class="a" style="left:1098px;top:1373px;width:1.5px;height:96px;background:#777"></div>
<div class="a" style="left:1091px;top:1377px;width:7px;height:90px;background:#f4f4f4"></div>
<div class="tri" style="left:1094px;top:1417px;border-width:4.5px 4px 4.5px 0;border-right-color:#3f6ca8"></div>

<div class="sr" style="left:154px;top:1377px;width:268px;background:#ffffd2;border-right:2px solid #c0c0c0">Project name</div><div class="sr" style="left:422px;top:1377px;width:267px;background:#fff"></div>
<div class="sr" style="left:154px;top:1395px;width:268px;background:#ffffd2;border-right:2px solid #c0c0c0">Author name</div><div class="sr" style="left:422px;top:1395px;width:267px;background:#fff"></div>
<div class="sr" style="left:154px;top:1413px;width:268px;background:#ffffd2;border-right:2px solid #c0c0c0">Location</div><div class="sr" style="left:422px;top:1413px;width:267px;background:#fff"></div>
<div class="sr" style="left:154px;top:1431px;width:268px;background:#ffffd2;border-right:2px solid #c0c0c0">User name</div><div class="sr" style="left:422px;top:1431px;width:267px;background:#fff"></div>
<div class="sr" style="left:154px;top:1449px;width:268px;background:#ffffd2;border-right:2px solid #c0c0c0">Comment</div><div class="sr" style="left:422px;top:1449px;width:267px;background:#fff"></div>

</div>
</body></html>
